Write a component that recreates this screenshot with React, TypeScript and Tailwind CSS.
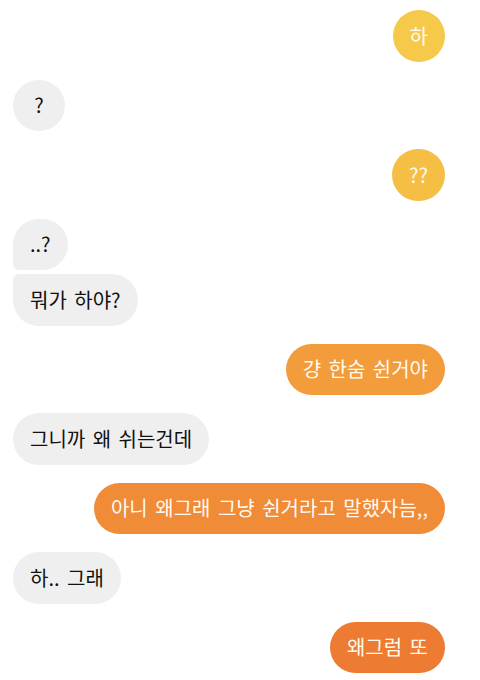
import React from "react";

type Msg = {
  text: string;
  mine: boolean;
  color?: string;
  shape?: string;
  gap: string;
};

// bubble colours shift from yellow to orange down the thread
const messages: Msg[] = [
  { text: "하", mine: true, color: "bg-[#f7c94b]", gap: "mt-[10px]" },
  { text: "?", mine: false, gap: "mt-[18px]" },
  { text: "??", mine: true, color: "bg-[#f5bf45]", gap: "mt-[18px]" },
  { text: "..?", mine: false, shape: "rounded-bl-[6px]", gap: "mt-[18px]" },
  { text: "뭐가 하야?", mine: false, shape: "rounded-tl-[6px]", gap: "mt-[4px]" },
  { text: "걍 한숨 쉰거야", mine: true, color: "bg-[#f29c3c]", gap: "mt-[18px]" },
  { text: "그니까 왜 쉬는건데", mine: false, gap: "mt-[18px]" },
  { text: "아니 왜그래 그냥 쉰거라고 말했자늠,,", mine: true, color: "bg-[#f08b37]", gap: "mt-[18px]" },
  { text: "하.. 그래", mine: false, gap: "mt-[18px]" },
  { text: "왜그럼 또", mine: true, color: "bg-[#ee7b32]", gap: "mt-[18px]" },
];

const App: React.FC = () => {
  return (
    <div
      className="w-[480px] h-[680px] bg-white overflow-hidden flex flex-col pl-[13px] pr-[35px]"
      style={{ fontFamily: '"Noto Sans CJK KR", "Noto Sans", sans-serif' }}
    >
      {messages.map((m, i) => (
        <div
          key={i}
          className={`${m.gap} flex ${m.mine ? "justify-end" : "justify-start"}`}
        >
          <div
            className={`h-[51.5px] min-w-[52px] px-[17px] flex items-center justify-center rounded-[26px] text-[20px] leading-none whitespace-nowrap [word-spacing:3px] ${
              m.mine ? `${m.color} text-[#fffaf0]` : "bg-[#efefef] text-[#111111]"
            } ${m.shape ?? ""}`}
          >
            {m.text}
          </div>
        </div>
      ))}
    </div>
  );
};

export default App;
